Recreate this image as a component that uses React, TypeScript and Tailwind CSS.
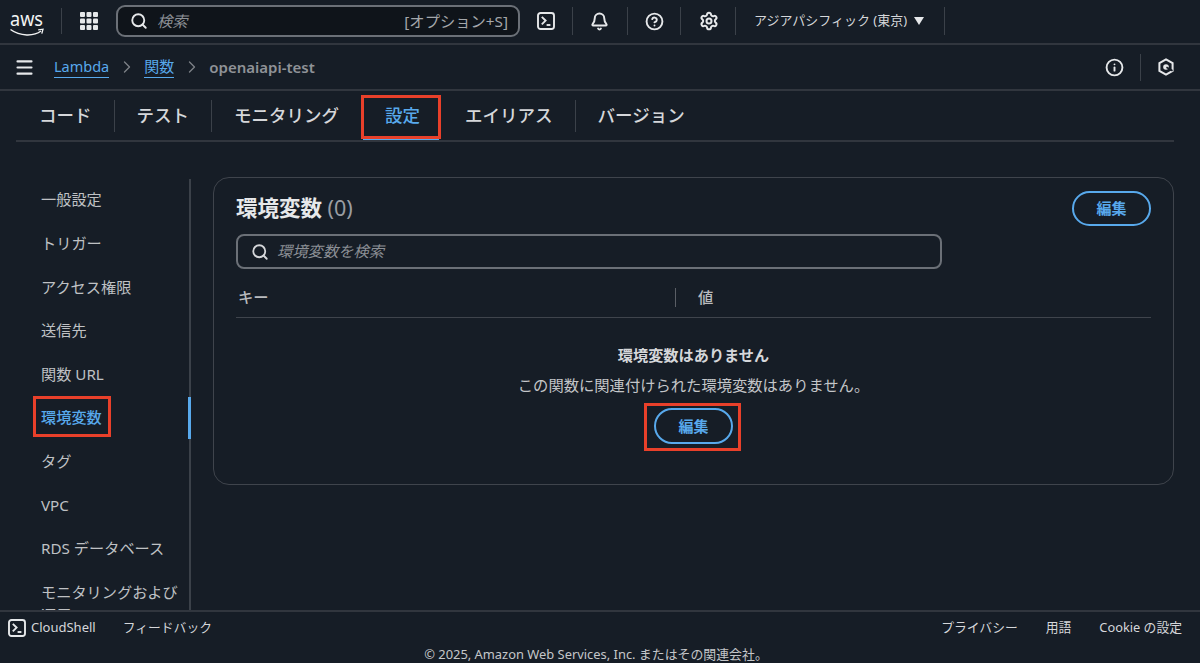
import { Bell, CircleHelp, Settings, Info, Search, Menu, ChevronRight } from "lucide-react";

const Sep = ({ className = "" }: { className?: string }) => <div className={`w-px shrink-0 bg-[#3b4149] ${className}`} />;

const TerminalIcon = ({ size = 18 }: { size?: number }) => (
  <svg width={size} height={size} viewBox="0 0 18 18" fill="none" stroke="#e6e8ea" strokeWidth="1.9">
    <rect x="1" y="1" width="16" height="16" rx="2.5" />
    <path d="M4.8 4.8 8.6 8.6 4.8 12.4" />
    <path d="M9.6 13h3.8" />
  </svg>
);

const GridIcon = () => (
  <svg width="18" height="18" viewBox="0 0 18 18" fill="#e6e8ea">
    {[0, 6.5, 13].flatMap((y) =>
      [0, 6.5, 13].map((x) => <rect key={`${x}-${y}`} x={x} y={y} width="5" height="5" rx="1" />)
    )}
  </svg>
);

const AwsLogo = () => (
  <svg width="34" height="26" viewBox="0 0 34 26" fill="none">
    <text x="0" y="14" fill="#f2f3f3" fontSize="19" fontFamily="'Noto Sans', sans-serif" textLength="33" lengthAdjust="spacingAndGlyphs">aws</text>
    <path d="M0.5 17.5C10 24.5 24 24.5 31 19" stroke="#f2f3f3" strokeWidth="1.5" />
    <path d="M28.2 17.8 33 17.2l-1.2 4.4" stroke="#f2f3f3" strokeWidth="1.3" />
  </svg>
);

const HexIcon = () => (
  <svg width="18" height="18" viewBox="0 0 18 18" fill="none">
    <path d="M9 1.4 15.6 5.1V12.9L9 16.6 2.4 12.9V5.1Z" stroke="#e6e8ea" strokeWidth="2" />
    <circle cx="9" cy="9" r="2.8" fill="#e6e8ea" />
    <path d="M9.4 9.2 15.6 12.8" stroke="#161d26" strokeWidth="1.7" />
  </svg>
);

const EditButton = ({ className = "" }: { className?: string }) => (
  <button className={`flex items-center justify-center rounded-full border-2 border-[#58a9ec] text-[15px] font-bold text-[#58a9ec] ${className}`}>
    編集
  </button>
);

const tabs = ["コード", "テスト", "モニタリング", "設定", "エイリアス", "バージョン"];
const navItems = ["一般設定", "トリガー", "アクセス権限", "送信先", "関数 URL", "環境変数", "タグ", "VPC", "RDS データベース"];

export default function App() {
  return (
    <div className="flex h-[663px] w-[1200px] flex-col overflow-hidden bg-[#161d26] text-[#d5d7da] [font-family:'Noto_Sans','Noto_Sans_CJK_JP',sans-serif]">
      {/* Top navigation */}
      <header className="flex h-[45px] shrink-0 items-center border-b-2 border-[#31363e] pb-[1px]">
        <div className="ml-[10px] mt-[7px] w-[34px]"><AwsLogo /></div>
        <Sep className="ml-[17px] h-[26px]" />
        <div className="ml-[18px]"><GridIcon /></div>
        <div className="ml-[18px] flex h-[32px] w-[404px] items-center rounded-[9px] border-2 border-[#6b7077] bg-[#0f141a] pl-[12px] pr-[10px]">
          <Search size={18} strokeWidth={2.5} className="text-[#e6e8ea]" />
          <span className="ml-[9px] text-[15.3px] italic text-[#8c9096]">検索</span>
          <span className="ml-auto text-[15.3px] text-[#a4a7ab]">[オプション+S]</span>
        </div>
        <div className="ml-[17px]"><TerminalIcon /></div>
        <Sep className="ml-[17px] h-[28px]" />
        <Bell size={19} strokeWidth={2.5} className="ml-[17px] text-[#e6e8ea]" />
        <Sep className="ml-[18px] h-[28px]" />
        <CircleHelp size={19} strokeWidth={2.4} className="ml-[17px] text-[#e6e8ea]" />
        <Sep className="ml-[16px] h-[28px]" />
        <Settings size={20} strokeWidth={2.4} className="ml-[18px] text-[#e6e8ea]" />
        <Sep className="ml-[16px] h-[28px]" />
        <span className="ml-[18px] text-[13px] text-[#d5d7da]">アジアパシフィック (東京)</span>
        <svg width="10" height="8" viewBox="0 0 10 8" className="ml-[7px]"><path d="M0 0h10L5 8Z" fill="#e6e8ea" /></svg>
        <Sep className="ml-[20px] h-[28px]" />
      </header>

      {/* Breadcrumb bar */}
      <div className="flex h-[46px] shrink-0 items-center border-b-2 border-[#31363e] pl-[14px] pr-[25px]">
        <Menu size={21} strokeWidth={2.4} className="text-[#e6e8ea]" />
        <a className="ml-[19px] border-b border-[#58a9ec] text-[14.5px] leading-[21px] text-[#58a9ec]">Lambda</a>
        <ChevronRight size={20} strokeWidth={1.6} className="ml-[8px] text-[#7d8187]" />
        <a className="ml-[7px] border-b border-[#58a9ec] text-[15px] leading-[21px] text-[#58a9ec]">関数</a>
        <ChevronRight size={20} strokeWidth={1.6} className="ml-[8px] text-[#7d8187]" />
        <span className="ml-[7px] text-[15px] font-semibold text-[#8f9297]">openaiapi-test</span>
        <Info size={19} strokeWidth={2.4} className="ml-auto text-[#e6e8ea]" />
        <Sep className="ml-[16px] h-[27px]" />
        <div className="ml-[16px]"><HexIcon /></div>
      </div>

      {/* Tabs */}
      <div className="ml-[16px] mr-[26px] flex h-[51px] shrink-0 items-center border-b-2 border-[#31363e] pl-[1px]">
        {tabs.map((t, i) => (
          <div key={t} className="flex items-center">
            <div className={`relative flex h-[49px] items-center px-[22px] text-[17.5px] font-medium ${t === "設定" ? "ml-[2px] mr-[1px] text-[#58a9ec]" : "text-[#d5d7da]"}`}>
              {t}
              {t === "設定" && (
                <>
                  <div className="absolute bottom-0 left-0 right-[3px] h-[2px] bg-[#58a9ec]" />
                  <div className="absolute -left-[2px] right-[1px] top-[4px] bottom-[1px] border-[3px] border-[#e8402a]" />
                </>
              )}
            </div>
            {i < tabs.length - 1 && t !== "モニタリング" && t !== "設定" && <Sep className="h-[32px]" />}
          </div>
        ))}
      </div>

      {/* Body */}
      <div className="flex min-h-0 flex-1 pt-[37px]">
        <nav className="relative h-full w-[191px] shrink-0">
          <div className="h-full overflow-hidden pl-[41px] text-[15.2px] text-[#bfc1c4]">
            <div className="-mt-[1px]">
              {navItems.map((n) => (
                <div key={n} className={`relative flex h-[43.6px] items-center ${n === "環境変数" ? "font-medium text-[#58a9ec]" : ""}`}>
                  {n}
                  {n === "環境変数" && (
                    <div className="absolute -left-[8px] top-[0px] h-[41px] w-[78px] border-[3px] border-[#e8402a]" />
                  )}
                </div>
              ))}
              <div className="mt-[11px] w-[140px] leading-[23px]">モニタリングおよび運用ツール</div>
            </div>
          </div>
          <div className="absolute inset-y-0 right-0 w-[2px] bg-[#3b4149]" />
          <div className="absolute right-0 top-[218px] h-[42px] w-[3px] bg-[#58a9ec]" />
        </nav>

        <main className="ml-[22px] mt-[-2px] h-[308px] w-[961px] rounded-[16px] border border-[#3f444c] px-[22px]">
          <div className="flex items-start justify-between pt-[13px]">
            <h2 className="pt-[1px] text-[21.5px] font-bold leading-[32px] text-[#e6e8ea]">
              環境変数 <span className="font-normal text-[#9a9da2]">(0)</span>
            </h2>
            <EditButton className="h-[35px] w-[79px]" />
          </div>
          <div className="mt-[8px] flex h-[35px] w-[706px] items-center rounded-[8px] border-2 border-[#6b7077] pl-[13px]">
            <Search size={18} strokeWidth={2.4} className="text-[#d5d7da]" />
            <span className="ml-[8px] text-[15.3px] italic text-[#8c9096]">環境変数を検索</span>
          </div>
          <div className="mt-[14px] flex h-[35px] items-center border-b border-[#3f444c] pb-[6px] text-[15.3px] font-medium text-[#b9bbbe]">
            <span className="ml-[2px] w-[437px]">キー</span>
            <Sep className="h-[19px] bg-[#5a5e65]" />
            <span className="ml-[22px]">値</span>
          </div>
          <div className="flex flex-col items-center pt-[27px]">
            <div className="text-[15.2px] font-bold leading-[20px] text-[#d5d7da]">環境変数はありません</div>
            <div className="mt-[10px] text-[15.3px] leading-[20px] text-[#c4c6c9]">この関数に関連付けられた環境変数はありません。</div>
            <div className="relative mt-[13px]">
              <EditButton className="h-[36px] w-[79px]" />
              <div className="absolute -left-[10px] -right-[8px] -top-[5px] -bottom-[7px] border-[3px] border-[#e8402a]" />
            </div>
          </div>
        </main>
      </div>

      {/* Footer */}
      <footer className="h-[53px] shrink-0 border-t-2 border-[#31363e] text-[12.8px] text-[#d5d7da]">
        <div className="flex h-[30px] items-center pl-[8px] pr-[18px] pt-[1px]">
          <TerminalIcon />
          <span className="ml-[5px] text-[13px]">CloudShell</span>
          <span className="ml-[27px]">フィードバック</span>
          <span className="ml-auto">プライバシー</span>
          <span className="ml-[28px]">用語</span>
          <span className="ml-[28px]">Cookie の設定</span>
        </div>
        <div className="mt-[2px] pr-[8px] text-center text-[12.9px] leading-[20px] text-[#c4c6c9]">© 2025, Amazon Web Services, Inc. またはその関連会社。</div>
      </footer>
    </div>
  );
}
